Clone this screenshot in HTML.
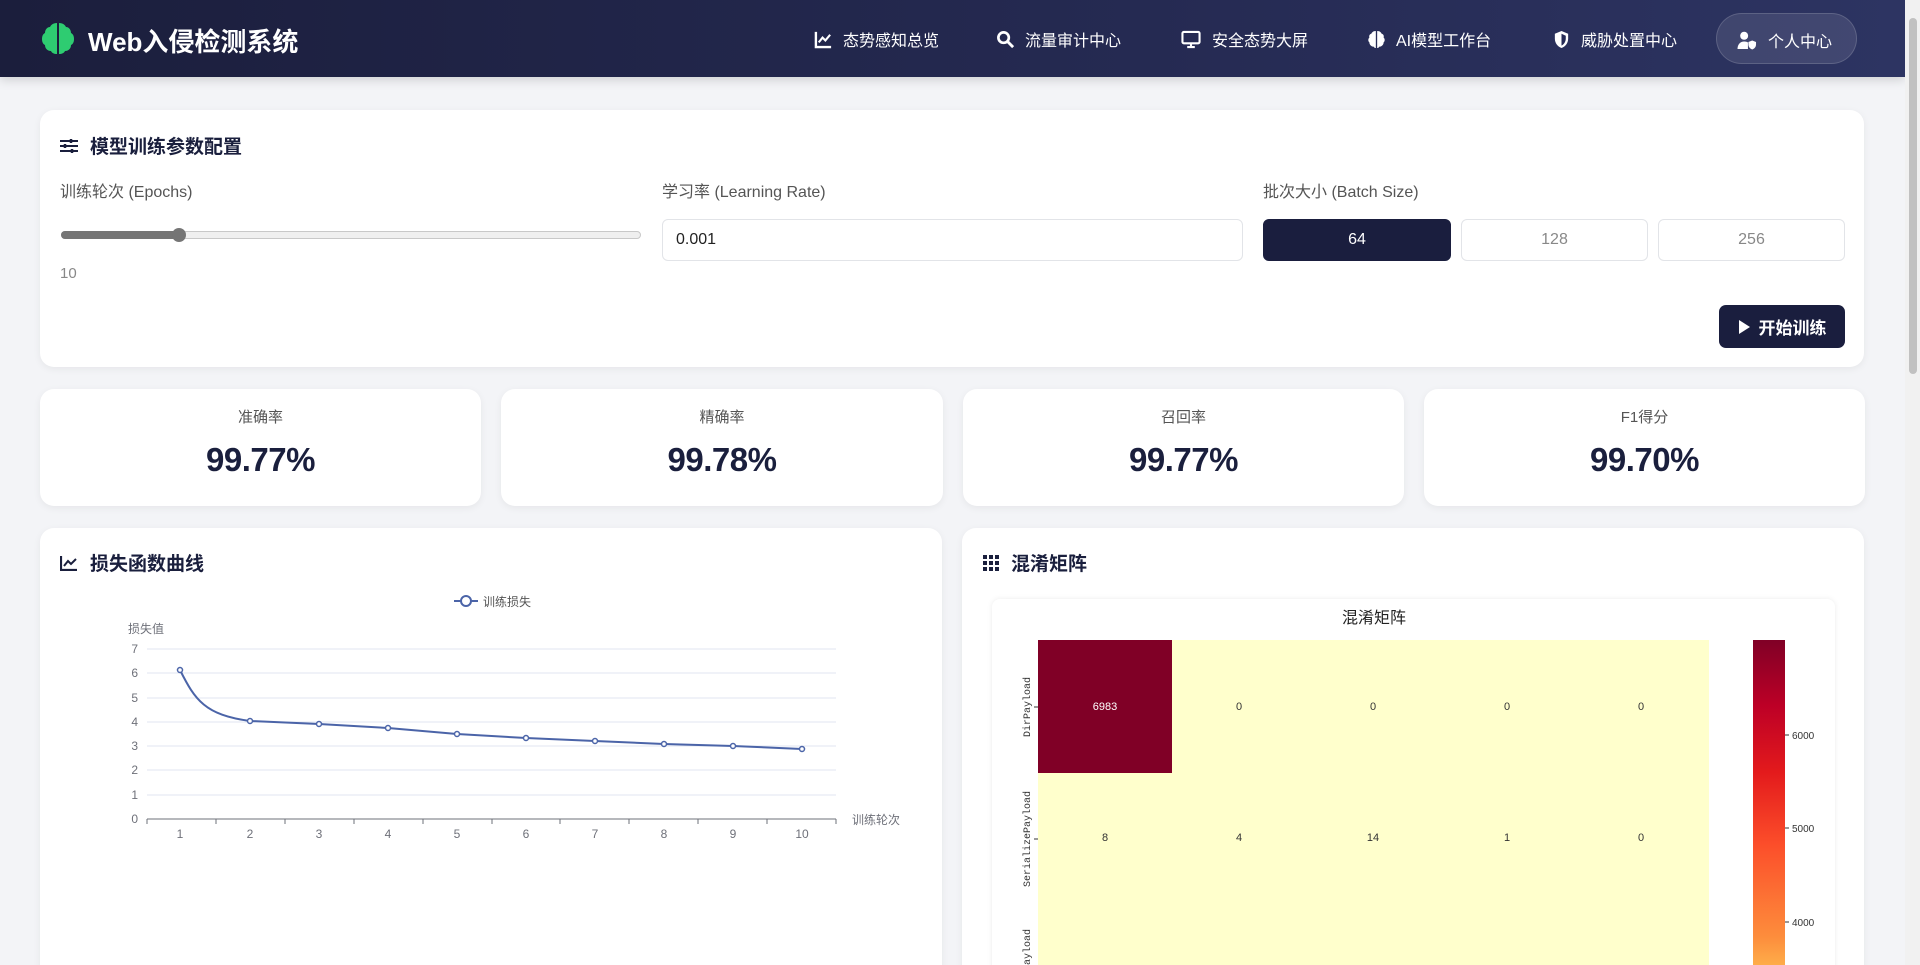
<!DOCTYPE html>
<html style="width:1920px;height:965px;overflow:hidden"><head><meta charset="utf-8"><style>
*{box-sizing:border-box;margin:0;padding:0}
body{width:1920px;height:965px;overflow:hidden;background:#f3f4f7;font-family:"Liberation Sans","Noto Sans CJK SC",sans-serif;position:relative;color:#1a1f3d}
.hdr{position:absolute;left:0;top:0;width:1905px;height:77px;background:linear-gradient(90deg,#1b1e3c,#252a52 60%,#2d3462);box-shadow:0 3px 10px rgba(0,0,0,.15)}
.logo{position:absolute;left:88px;top:22px;color:#fff;font-size:26px;font-weight:bold}
.nav{position:absolute;top:27px;color:#fff;font-size:16px;display:flex;align-items:center;gap:10px}
.nav svg{width:19px;height:19px}
.pill{position:absolute;left:1716px;top:13px;width:141px;height:51px;border-radius:26px;background:rgba(255,255,255,.1);border:1px solid rgba(255,255,255,.15)}
.sb{position:absolute;left:1905px;top:0;width:15px;height:965px;background:#f1f1f1}
.sb div{position:absolute;left:4px;top:18px;width:8px;height:356px;background:#c1c1c1;border-radius:4px}
.card{position:absolute;background:#fff;border-radius:14px;box-shadow:0 2px 8px rgba(0,0,0,.06)}
.ttl{position:absolute;font-size:19px;font-weight:bold;display:flex;align-items:center;gap:12px;color:#1a1f3d}
.lbl{position:absolute;top:178px;font-size:16px;color:#555}
.box{position:absolute;top:219px;height:42px;border:1px solid #e2e4e8;border-radius:6px;font-size:16px;display:flex;align-items:center}
.mc{text-align:center}
.mc .l{position:absolute;top:17px;width:100%;font-size:15px;color:#555}
.mc .v{position:absolute;top:52px;width:100%;font-size:33px;font-weight:bold;color:#1a1f3d;letter-spacing:-0.5px}
.ax{position:absolute;font-size:12px;color:#6e7079}
.cell{position:absolute;font-size:11px;color:#333;width:134px;text-align:center}
</style></head><body>
<div class="hdr">
<svg style="position:absolute;left:40px;top:20px" width="36" height="36" viewBox="0 0 36 36"><path fill="#2ecc71" d="M17 3c-4 0-6 2-7 4-3 0-5 3-5 6-2 1-3 3-3 6s1 5 3 6c0 3 2 6 6 6 1 2 3 3 6 3zM19 3c4 0 6 2 7 4 3 0 5 3 5 6 2 1 3 3 3 6s-1 5-3 6c0 3-2 6-6 6-1 2-3 3-6 3z"/></svg>
<div class="logo">Web入侵检测系统</div>
<div class="nav" style="left:814px"><svg viewBox="0 0 20 20"><path d="M2 2v16h16" stroke="#fff" stroke-width="2.5" fill="none"/><path d="M5 13l4-5 3 3 5-6" stroke="#fff" stroke-width="2.2" fill="none"/></svg>态势感知总览</div>
<div class="nav" style="left:996px"><svg viewBox="0 0 20 20"><circle cx="8" cy="8" r="5.5" stroke="#fff" stroke-width="2.8" fill="none"/><path d="M12 12l6 6" stroke="#fff" stroke-width="3"/></svg>流量审计中心</div>
<div class="nav" style="left:1180px"><svg viewBox="0 0 20 20" style="width:22px"><rect x="1" y="2" width="18" height="12" rx="1.5" stroke="#fff" stroke-width="2.2" fill="none"/><path d="M6 18h8M10 14v4" stroke="#fff" stroke-width="2.2"/></svg>安全态势大屏</div>
<div class="nav" style="left:1367px"><svg viewBox="0 0 20 20"><path fill="#fff" d="M9.3 1C6 1 5 3 4.5 4 2.5 4.5 2 6.5 2.5 8 1 9 1 12 2.5 13c0 2.5 2 4.5 4.5 4.5.5 1 1.5 1.5 2.3 1.5zM10.7 1c3.3 0 4.3 2 4.8 3 2 .5 2.5 2.5 2 4 1.5 1 1.5 4 0 5 0 2.5-2 4.5-4.5 4.5-.5 1-1.5 1.5-2.3 1.5z"/></svg>AI模型工作台</div>
<div class="nav" style="left:1552px"><svg viewBox="0 0 20 20"><path fill="#fff" d="M10 1l7 3v5c0 5-3 8.5-7 10-4-1.5-7-5-7-10V4z"/><path fill="#262b56" d="M10 4v12.5c2.5-1.2 4.5-4 4.5-7.5V6z"/></svg>威胁处置中心</div>
<div class="pill"></div>
<div class="nav" style="left:1736px;top:28px"><svg viewBox="0 0 22 20" style="width:22px"><circle cx="8" cy="5" r="4.2" fill="#fff"/><path fill="#fff" d="M1 19c0-5 3-8 7-8 2 0 3 .5 4 1v7z"/><path fill="#fff" d="M16.5 10l4 1.6v2.6c0 2.6-1.8 4.4-4 5.3-2.2-.9-4-2.7-4-5.3v-2.6z"/></svg>个人中心</div>
</div>
<div class="sb"><div></div></div>

<div class="card" style="left:40px;top:110px;width:1824px;height:257px"></div>
<div class="ttl" style="left:60px;top:132px"><svg width="18" height="16" viewBox="0 0 18 16"><path d="M0 3h18M0 8h18M0 13h18" stroke="#1a1f3d" stroke-width="2"/><path d="M11 1v4M5 6v4M12 11v4" stroke="#1a1f3d" stroke-width="2.5"/></svg>模型训练参数配置</div>
<div class="lbl" style="left:60px">训练轮次 (Epochs)</div>
<div class="lbl" style="left:662px">学习率 (Learning Rate)</div>
<div class="lbl" style="left:1263px">批次大小 (Batch Size)</div>
<div style="position:absolute;left:61px;top:231px;width:580px;height:8px;border-radius:4px;background:#efefef;border:1px solid #c8c8c8"></div>
<div style="position:absolute;left:61px;top:231px;width:120px;height:8px;border-radius:4px;background:#757575"></div>
<div style="position:absolute;left:172px;top:228px;width:14px;height:14px;border-radius:50%;background:#757575"></div>
<div style="position:absolute;left:60px;top:265px;font-size:15px;color:#888">10</div>
<div class="box" style="left:662px;width:581px;padding-left:13px;color:#222">0.001</div>
<div class="box" style="left:1263px;width:188px;justify-content:center;background:#1a1e3e;color:#fff;border-color:#1a1e3e">64</div>
<div class="box" style="left:1461px;width:187px;justify-content:center;color:#888">128</div>
<div class="box" style="left:1658px;width:187px;justify-content:center;color:#888">256</div>
<div style="position:absolute;left:1719px;top:305px;width:126px;height:43px;background:#1a1e3e;border-radius:7px;color:#fff;font-size:17px;font-weight:bold;display:flex;align-items:center;justify-content:center;gap:8px"><svg width="13" height="16" viewBox="0 0 13 16"><path d="M1 1l11 7-11 7z" fill="#fff"/></svg>开始训练</div>

<div class="card mc" style="left:40px;top:389px;width:441px;height:117px"><div class="l">准确率</div><div class="v">99.77%</div></div>
<div class="card mc" style="left:501px;top:389px;width:442px;height:117px"><div class="l">精确率</div><div class="v">99.78%</div></div>
<div class="card mc" style="left:963px;top:389px;width:441px;height:117px"><div class="l">召回率</div><div class="v">99.77%</div></div>
<div class="card mc" style="left:1424px;top:389px;width:441px;height:117px"><div class="l">F1得分</div><div class="v">99.70%</div></div>

<div class="card" style="left:40px;top:528px;width:902px;height:460px"></div>
<div class="ttl" style="left:60px;top:549px"><svg width="18" height="16" viewBox="0 0 18 16"><path d="M1 1v14h16" stroke="#1a1f3d" stroke-width="2.2" fill="none"/><path d="M4 11l4-5 3 3 5-5" stroke="#1a1f3d" stroke-width="2" fill="none"/></svg>损失函数曲线</div>
<svg style="position:absolute;left:0;top:0" width="960" height="965">
<g stroke="#e0e6f1" stroke-width="1"><path d="M147 649H836M147 673H836M147 698H836M147 722H836M147 746H836M147 770H836M147 795H836"/></g>
<path d="M147 819H836" stroke="#6e7079"/>
<g stroke="#6e7079"><path d="M147 819v5M216 819v5M285 819v5M354 819v5M423 819v5M492 819v5M560 819v5M629 819v5M698 819v5M767 819v5M836 819v5"/></g>
<path d="M180 670 C195 700 205 715 250 721 L319 724 L388 728 L457 734 L526 738 L595 741 L664 744 L733 746 L802 749" stroke="#4b64a8" stroke-width="2" fill="none"/>
<g fill="#fff" stroke="#4b64a8" stroke-width="1.5"><circle cx="180" cy="670" r="2.5"/><circle cx="250" cy="721" r="2.5"/><circle cx="319" cy="724" r="2.5"/><circle cx="388" cy="728" r="2.5"/><circle cx="457" cy="734" r="2.5"/><circle cx="526" cy="738" r="2.5"/><circle cx="595" cy="741" r="2.5"/><circle cx="664" cy="744" r="2.5"/><circle cx="733" cy="746" r="2.5"/><circle cx="802" cy="749" r="2.5"/></g>
<path d="M454 601h24" stroke="#4b64a8" stroke-width="2"/><circle cx="466" cy="601" r="5" fill="#fff" stroke="#4b64a8" stroke-width="2"/>
<g font-size="12" fill="#6e7079" font-family="Liberation Sans,sans-serif" text-anchor="end"><text x="138" y="653">7</text><text x="138" y="677">6</text><text x="138" y="702">5</text><text x="138" y="726">4</text><text x="138" y="750">3</text><text x="138" y="774">2</text><text x="138" y="799">1</text><text x="138" y="823">0</text></g>
<g font-size="12" fill="#6e7079" font-family="Liberation Sans,sans-serif" text-anchor="middle"><text x="180" y="838">1</text><text x="250" y="838">2</text><text x="319" y="838">3</text><text x="388" y="838">4</text><text x="457" y="838">5</text><text x="526" y="838">6</text><text x="595" y="838">7</text><text x="664" y="838">8</text><text x="733" y="838">9</text><text x="802" y="838">10</text></g>
</svg>
<div class="ax" style="left:483px;top:593px;color:#555">训练损失</div>
<div class="ax" style="left:128px;top:620px">损失值</div>
<div class="ax" style="left:852px;top:811px">训练轮次</div>

<div class="card" style="left:962px;top:528px;width:902px;height:460px"></div>
<div class="ttl" style="left:983px;top:549px"><svg width="16" height="16" viewBox="0 0 16 16" fill="#1a1f3d"><rect x="0" y="0" width="4" height="4"/><rect x="6" y="0" width="4" height="4"/><rect x="12" y="0" width="4" height="4"/><rect x="0" y="6" width="4" height="4"/><rect x="6" y="6" width="4" height="4"/><rect x="12" y="6" width="4" height="4"/><rect x="0" y="12" width="4" height="4"/><rect x="6" y="12" width="4" height="4"/><rect x="12" y="12" width="4" height="4"/></svg>混淆矩阵</div>
<div style="position:absolute;left:992px;top:599px;width:843px;height:400px;background:#fff;border-radius:8px;box-shadow:0 0 6px rgba(0,0,0,.08)"></div>
<div style="position:absolute;left:1342px;top:604px;font-size:16px;color:#222">混淆矩阵</div>
<div style="position:absolute;left:1038px;top:640px;width:671px;height:330px;background:#ffffcc"></div>
<div style="position:absolute;left:1038px;top:640px;width:134px;height:133px;background:#800026"></div>
<div style="position:absolute;left:1753px;top:640px;width:32px;height:330px;background:linear-gradient(#800026 0%,#bd0026 20%,#e31a1c 40%,#fc4e2a 62%,#fd8d3c 90%,#feb24c 100%)"></div>
<svg style="position:absolute;left:0;top:0" width="1920" height="965">
<g stroke="#333"><path d="M1785 735h4M1785 828h4M1785 922h4M1034 707h4M1034 839h4"/></g>
<g font-size="10" fill="#333" font-family="Liberation Sans,sans-serif"><text x="1792" y="739">6000</text><text x="1792" y="832">5000</text><text x="1792" y="926">4000</text></g>
<g font-size="10" fill="#333" font-family="Liberation Mono,monospace" text-anchor="middle"><text transform="translate(1030 707) rotate(-90)">DirPayload</text><text transform="translate(1030 839) rotate(-90)">SerializePayload</text><text transform="translate(1030 950) rotate(-90)">Payload</text></g>
</svg>
<div class="cell" style="left:1038px;top:701px;color:#fff">6983</div>
<div class="cell" style="left:1172px;top:701px">0</div>
<div class="cell" style="left:1306px;top:701px">0</div>
<div class="cell" style="left:1440px;top:701px">0</div>
<div class="cell" style="left:1574px;top:701px">0</div>
<div class="cell" style="left:1038px;top:832px">8</div>
<div class="cell" style="left:1172px;top:832px">4</div>
<div class="cell" style="left:1306px;top:832px">14</div>
<div class="cell" style="left:1440px;top:832px">1</div>
<div class="cell" style="left:1574px;top:832px">0</div>
</body></html>
